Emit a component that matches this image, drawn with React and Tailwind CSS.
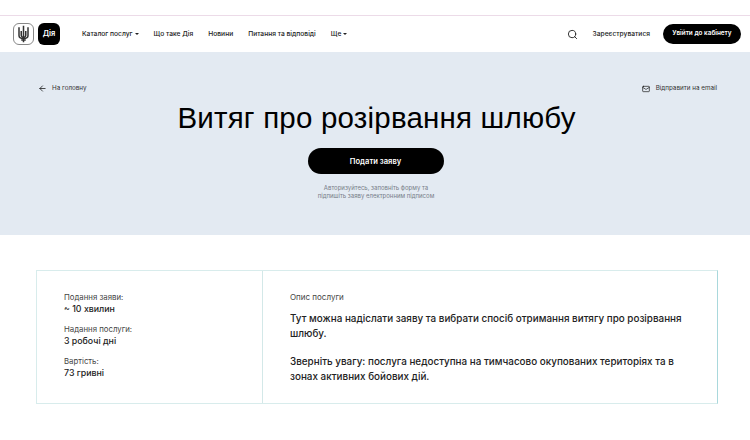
import React from "react";
import { Search, ArrowLeft, Mail } from "lucide-react";

function Caret() {
  return <span className="ml-[2px] inline-block border-x-[2px] border-t-[2px] border-x-transparent border-t-[#222] align-middle" />;
}

function Trident() {
  return (
    <svg viewBox="0 0 16 24" className="h-[18px] w-[13px]" fill="none" stroke="#333" strokeWidth="2">
      <path d="M8 1v17M2 3v11c0 3 2 4 6 4s6-1 6-4V3" />
      <path d="M5 8v6c0 1 1 2 3 3M11 8v6c0 1-1 2-3 3" />
      <path d="M8 18v5M5 20h6" />
    </svg>
  );
}

function Fact({ label, value }) {
  return (
    <div>
      <div className="text-[7.8px] leading-[12px] text-[#444]">{label}</div>
      <div className="text-[8.8px] leading-[12px] font-medium text-[#222]">{value}</div>
    </div>
  );
}

export default function App() {
  return (
    <div className="h-[440px] w-[750px] overflow-hidden bg-white font-['Inter',sans-serif] text-black">
      <div className="h-[15px] border-b border-[#ecdbe8] box-content" />

      <nav className="flex h-[36px] items-center pl-[13px] pr-[9px]">
        <div className="flex gap-[4px]">
          <div className="flex h-[22px] w-[21px] items-center justify-center rounded-[6px] border border-[#888] bg-white">
            <Trident />
          </div>
          <div className="flex h-[22px] w-[22px] items-center justify-center rounded-[6px] bg-black text-[7.5px] font-semibold text-white">
            Дія
          </div>
        </div>
        <div className="ml-[22px] flex gap-[15px] text-[6.7px] font-medium text-[#222]">
          <span>Каталог послуг<Caret /></span>
          <span>Що таке Дія</span>
          <span>Новини</span>
          <span>Питання та відповіді</span>
          <span>Ще<Caret /></span>
        </div>
        <div className="ml-auto flex items-center">
          <Search size={11} strokeWidth={2} color="#222" />
          <span className="ml-[15px] text-[6.7px] font-medium text-[#222]">Зареєструватися</span>
          <button className="ml-[13px] h-[20px] w-[78px] rounded-full bg-black text-[6.4px] font-semibold text-white">
            Увійти до кабінету
          </button>
        </div>
      </nav>

      <section className="h-[183px] bg-[#e3eaf2] px-[38px] pt-[32px]">
        <div className="flex items-center justify-between text-[6.3px] text-[#333]">
          <span className="flex items-center gap-[5px]">
            <ArrowLeft size={9} strokeWidth={2} color="#111" />
            На головну
          </span>
          <span className="-mr-[5px] flex items-center gap-[6px]">
            <Mail size={8} strokeWidth={2} color="#111" />
            Відправити на email
          </span>
        </div>
        <h1 className="mt-[7px] pl-[3px] text-center font-['Liberation_Sans',sans-serif] text-[29.5px] leading-[36px] tracking-[0.2px] text-black">
          Витяг про розірвання шлюбу
        </h1>
        <div className="mt-[12px] flex justify-center pl-[1px]">
          <button className="h-[26px] w-[136px] rounded-full bg-black text-[7.6px] font-semibold text-white">
            Подати заяву
          </button>
        </div>
        <p className="mt-[10px] pl-[2px] text-center text-[6px] leading-[7.5px] text-[#777d88]">
          Авторизуйтесь, заповніть форму та
          <br />
          підпишіть заяву електронним підписом
        </p>
      </section>

      <section className="px-[36px] pt-[35px]">
        <div className="flex h-[134px] w-[682px] border border-[#d8ecec] border-r-[#a9d8dc]">
          <div className="flex w-[226px] flex-col gap-[8px] border-r border-[#d3e8e8] pl-[27px] pt-[20px]">
            <Fact label="Подання заяви:" value="~ 10 хвилин" />
            <Fact label="Надання послуги:" value="3 робочі дні" />
            <Fact label="Вартість:" value="73 гривні" />
          </div>
          <div className="flex-1 pl-[27px] pr-[30px] pt-[20px]">
            <div className="text-[8px] leading-[12px] text-[#444]">Опис послуги</div>
            <p className="mt-[8px] text-[9.9px] leading-[14.5px] font-medium text-[#222]">
              Тут можна надіслати заяву та вибрати спосіб отримання витягу про розірвання шлюбу.
            </p>
            <p className="mt-[14px] text-[9.9px] leading-[14.5px] font-medium text-[#222]">
              Зверніть увагу: послуга недоступна на тимчасово окупованих територіях та в зонах активних бойових дій.
            </p>
          </div>
        </div>
      </section>
    </div>
  );
}
